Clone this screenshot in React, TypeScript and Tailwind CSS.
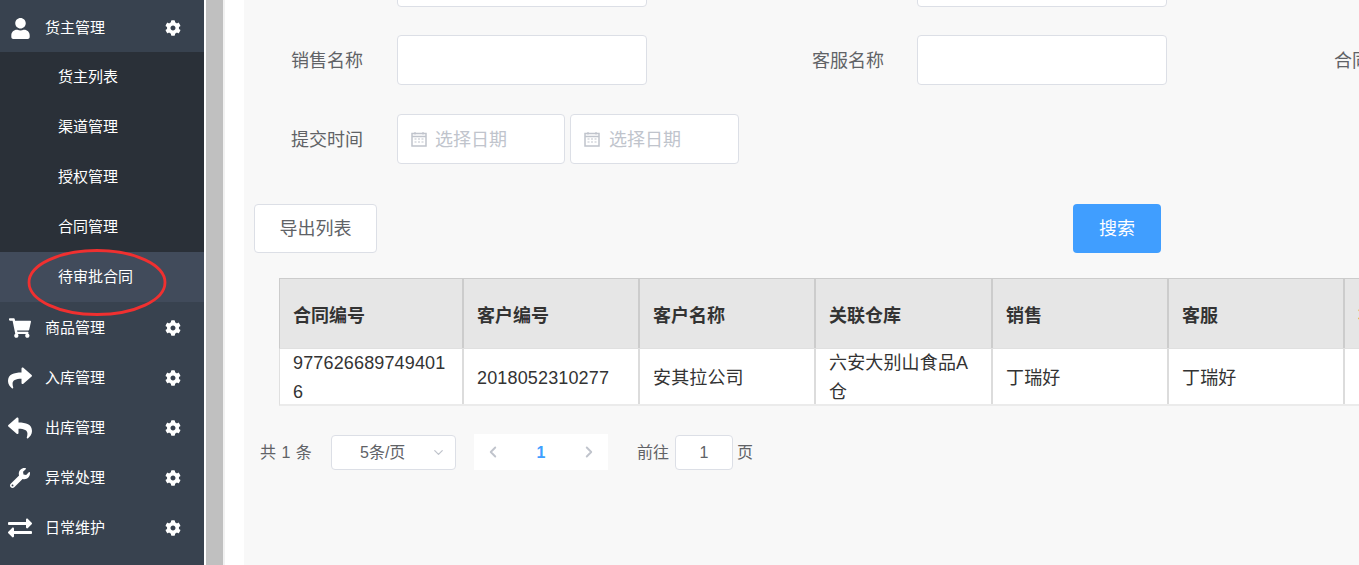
import React from 'react';
import { ChevronDown, ChevronLeft, ChevronRight } from 'lucide-react';
import { FaUser, FaShoppingCart, FaShare, FaReply, FaWrench, FaExchangeAlt, FaCog } from 'react-icons/fa';

const font = { fontFamily: '"Microsoft YaHei", "Liberation Sans", "Noto Sans CJK SC", sans-serif' };

const subMenu = ['货主列表', '渠道管理', '授权管理', '合同管理'];

const MenuItem: React.FC<{ icon: React.ReactNode; label: string }> = ({ icon, label }) => (
    <div className="h-[50px] pt-[2px] flex items-center text-white text-[15px]">
        <div className="w-[45px] flex justify-center pr-[5px] shrink-0">{icon}</div>
        <span className="w-[120px]">{label}</span>
        <FaCog className="text-[16px]" />
    </div>
);

const CalendarIcon = () => (
    <svg width="16" height="16" viewBox="0 0 16 16" className="text-[#c0c4cc] shrink-0">
        <path d="M1 2.5h14v12.5h-14z M1 5.5h14" fill="none" stroke="currentColor" strokeWidth="1.5" />
        <path d="M4 1v2.5M12 1v2.5M3.5 8h2M7 8h2M10.500 8h2M3.500 11h2M7 11h2M10.500 11h2" stroke="currentColor" strokeWidth="1.200" />
    </svg>
);

const DateInput: React.FC<{ className?: string }> = ({ className }) => (
    <div className={`h-[50px] bg-white border border-[#dcdfe6] rounded-[4px] flex items-center pl-[13px] text-[#c0c4cc] text-[18px] shrink-0 ${className || ''}`}>
        <CalendarIcon />
        <span className="pt-[2px]">选择日期</span>
    </div>
);

const TextInput = () => (
    <div className="w-[250px] h-[50px] bg-white border border-[#dcdfe6] rounded-[4px] shrink-0" />
);

const columns = [
    { title: '合同编号', width: 'w-[184px]' },
    { title: '客户编号', width: 'w-[176px]' },
    { title: '客户名称', width: 'w-[176px]' },
    { title: '关联仓库', width: 'w-[177px]' },
    { title: '销售', width: 'w-[176px]' },
    { title: '客服', width: 'w-[176px]' },
];

const rowCells = ['9776266897494016', '2018052310277', '安其拉公司', '六安大别山食品A仓', '丁瑞好', '丁瑞好'];

export default function App() {
    return (
        <div className="relative w-[1359px] h-[565px] overflow-hidden flex bg-white" style={font}>
            {/* Sidebar */}
            <div className="w-[204px] h-full bg-[#38424f] shrink-0 pt-[2px]">
                <MenuItem icon={<FaUser className="text-[21px]" />} label="货主管理" />
                <div className="bg-[#2a3038]">
                    {subMenu.map((name) => (
                        <div key={name} className="h-[50px] pt-[1px] flex items-center pl-[58px] text-white text-[15px]">{name}</div>
                    ))}
                </div>
                <div className="h-[50px] pt-[1px] bg-[#414b5b] flex items-center pl-[58px] text-white text-[15px]">待审批合同</div>
                <MenuItem icon={<FaShoppingCart className="text-[22px]" />} label="商品管理" />
                <MenuItem icon={<FaShare className="text-[24px]" />} label="入库管理" />
                <MenuItem icon={<FaReply className="text-[24px]" />} label="出库管理" />
                <MenuItem icon={<FaWrench className="text-[20px]" />} label="异常处理" />
                <MenuItem icon={<FaExchangeAlt className="text-[24px]" />} label="日常维护" />
            </div>

            {/* Scrollbar strip */}
            <div className="w-[2px] bg-white shrink-0" />
            <div className="w-[17px] bg-[#c0c0c0] shrink-0" />
            <div className="w-[2px] bg-[#f1f1f1] shrink-0" />
            <div className="w-[19px] bg-white shrink-0" />

            {/* Main */}
            <div className="flex-1 min-w-0 bg-[#f8f8f8] overflow-hidden -mt-[43px]">
                {/* Form */}
                <div className="flex h-[78px] pl-[153px]">
                    <TextInput />
                    <div className="w-[270px] shrink-0" />
                    <TextInput />
                </div>
                <div className="flex items-center h-[50px] text-[18px] text-[#606266]">
                    <span className="w-[153px] pl-[47px] pt-[2px] shrink-0">销售名称</span>
                    <TextInput />
                    <span className="w-[270px] pl-[165px] pt-[2px] whitespace-nowrap shrink-0">客服名称</span>
                    <TextInput />
                    <span className="ml-[167px] pt-[2px] whitespace-nowrap shrink-0">合同编号</span>
                </div>
                <div className="flex items-center h-[50px] mt-[29px] text-[18px] text-[#606266]">
                    <span className="w-[153px] pl-[47px] pt-[2px] shrink-0">提交时间</span>
                    <DateInput className="w-[168px] gap-[8px]" />
                    <DateInput className="w-[169px] ml-[5px] gap-[9px]" />
                </div>
                <div className="flex h-[49px] mt-[40px] pl-[10px]">
                    <button className="w-[123px] h-[49px] pt-[2px] bg-white border border-[#dcdfe6] rounded-[4px] text-[18px] text-[#606266]">导出列表</button>
                    <button className="w-[88px] h-[49px] pt-[2px] ml-[696px] bg-[#409eff] rounded-[4px] text-[18px] text-white">搜索</button>
                </div>

                {/* Table */}
                <div className="ml-[35px] mt-[25px] w-[1200px] bg-white text-[18px]">
                    <div className="flex h-[71px] bg-[#e6e6e6] font-bold text-[#333333] border-l border-t border-b border-t-[#cccccc] border-l-[#cccccc] border-b-[#e0e0e0]">
                        {columns.map((c) => (
                            <div key={c.title} className={`${c.width} shrink-0 flex items-center pl-[13px] pt-[5px] border-r-2 border-[#cccccc]`}>{c.title}</div>
                        ))}
                        <div className="flex-1 flex items-center pl-[13px] pt-[5px] text-[#c8641e]">状态</div>
                    </div>
                    <div className="flex h-[57px] border-l border-[#e0e0e0] border-b-2 border-b-[#ebebeb] text-[#333333] leading-[29px]">
                        {rowCells.map((text, i) => (
                            <div key={i} className={`${columns[i].width} shrink-0 flex items-center pl-[13px] pr-[12px] pt-[3px] border-r-2 border-[#dcdcdc] tracking-[0.15px] [overflow-wrap:anywhere]`}>{text}</div>
                        ))}
                    </div>
                </div>

                {/* Pagination */}
                <div className="flex items-center h-[36px] mt-[28px] pl-[16px] text-[#606266] text-[16px]">
                    <span className="w-[71px] pt-[2px] whitespace-nowrap [word-spacing:1px]">共 1 条</span>
                    <div className="w-[125px] h-[35px] bg-white border border-[#dcdfe6] rounded-[4px] flex items-center justify-between pl-[28px] pr-[9px]">
                        <span className="pt-[2px]">5条/页</span>
                        <ChevronDown size={15} className="text-[#c0c4cc]" />
                    </div>
                    <div className="w-[134px] h-[36px] ml-[18px] bg-white flex items-center justify-between px-[10px]">
                        <ChevronLeft size={18} strokeWidth={2.5} className="text-[#c0c4cc]" />
                        <span className="pt-[2px] font-bold text-[#409eff]">1</span>
                        <ChevronRight size={18} strokeWidth={2.5} className="text-[#c0c4cc]" />
                    </div>
                    <span className="ml-[29px] pt-[2px] whitespace-nowrap">前往</span>
                    <div className="w-[58px] h-[35px] ml-[6px] pt-[2px] bg-white border border-[#dcdfe6] rounded-[4px] flex items-center justify-center">1</div>
                    <span className="ml-[4px] pt-[2px]">页</span>
                </div>
            </div>

            {/* Red annotation circle */}
            <svg className="absolute left-[26px] top-[248px]" width="142" height="70" viewBox="0 0 142 70">
                <ellipse cx="71" cy="34.500" rx="68" ry="32" fill="none" stroke="#f03030" strokeWidth="2.800" />
            </svg>
        </div>
    );
}
